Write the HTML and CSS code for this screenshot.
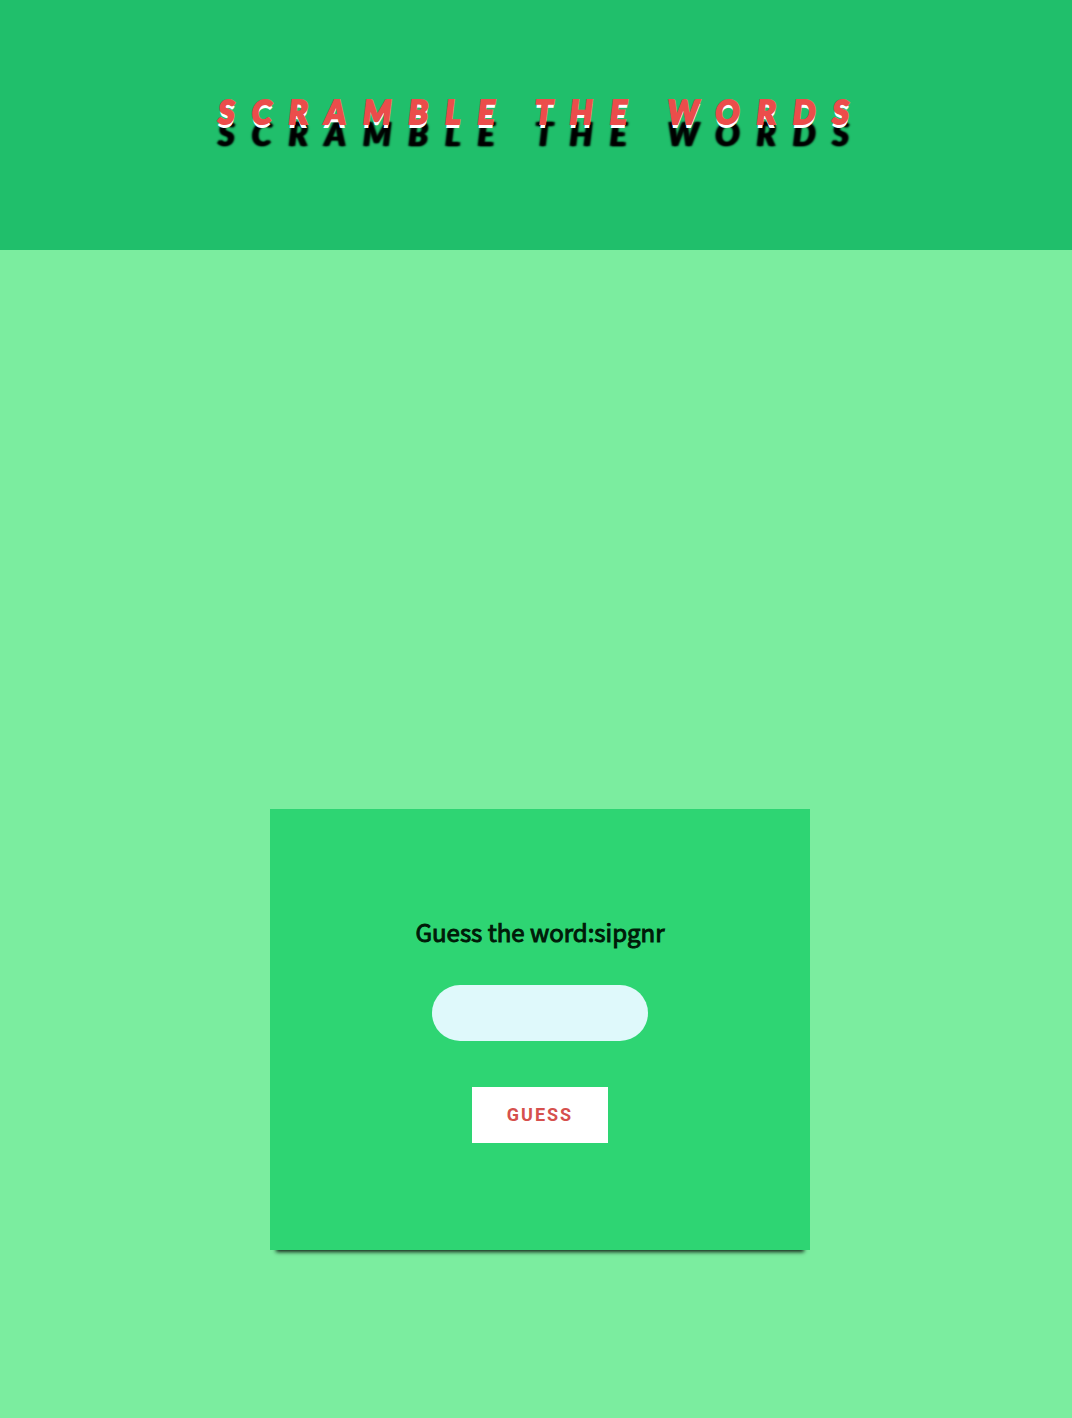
FILE: index.html
```html
<!DOCTYPE html>
<html lang="en">
<head>
  <meta charset="utf-8">
  <meta name="viewport" content="width=device-width, initial-scale=1">
  <title>Scramble the words</title>
  <link rel="stylesheet" href="styles.css">
</head>
<body>
  <header class="banner">
    <h1 class="title">SCRAMBLE THE WORDS</h1>
  </header>
  <main class="board">
    <form class="card">
      <label class="prompt" for="guess">Guess the word:sipgnr</label>
      <input class="answer" id="guess" type="text" autocomplete="off">
      <button class="submit" type="button">GUESS</button>
    </form>
  </main>
</body>
</html>
```

FILE: styles.css
```css
* {
  box-sizing: border-box;
}

body {
  display: flex;
  flex-direction: column;
  min-height: 100vh;
  margin: 0;
  background: #7bed9f;
  font-family: "Noto Sans CJK SC", "Noto Sans", sans-serif;
}

.banner {
  padding: 88px 4px 114px 16px;
  background: #20bf6b;
  text-align: center;
}

.title {
  margin: 0;
  color: #eb4d4b;
  font: italic 900 32px/48px Lato, sans-serif;
  letter-spacing: 17px;
  text-shadow: 0 4px 0 #fff, -1px 22px 2px #000, 1px 22px 2px #000;
  -webkit-text-stroke: 2px #eb4d4b;
}

.board {
  display: flex;
  flex: 1;
  flex-direction: column;
  align-items: center;
  justify-content: flex-end;
  padding: 64px 0 168px 8px;
}

.card {
  display: flex;
  flex-direction: column;
  align-items: center;
  width: 540px;
  max-width: 100%;
  padding: 103px 24px 107px;
  background: #2ed573;
  box-shadow: 0 8px 4px -6px rgba(0, 0, 0, 0.85);
}

.prompt {
  margin-bottom: 33px;
  color: #001a08;
  font-size: 24px;
  font-weight: 400;
  line-height: 40px;
  -webkit-text-stroke: 1px #001a08;
}

.answer {
  width: 216px;
  height: 56px;
  margin-bottom: 46px;
  padding: 0 24px;
  border: 0;
  border-radius: 28px;
  background: #dff9fb;
  font: 500 20px "Noto Sans CJK SC", sans-serif;
  text-align: center;
}

.submit {
  height: 56px;
  padding: 0 35px;
  border: 0;
  background: #fff;
  color: #d6504d;
  font: 700 18px/56px Roboto, sans-serif;
  letter-spacing: 2px;
}
```
